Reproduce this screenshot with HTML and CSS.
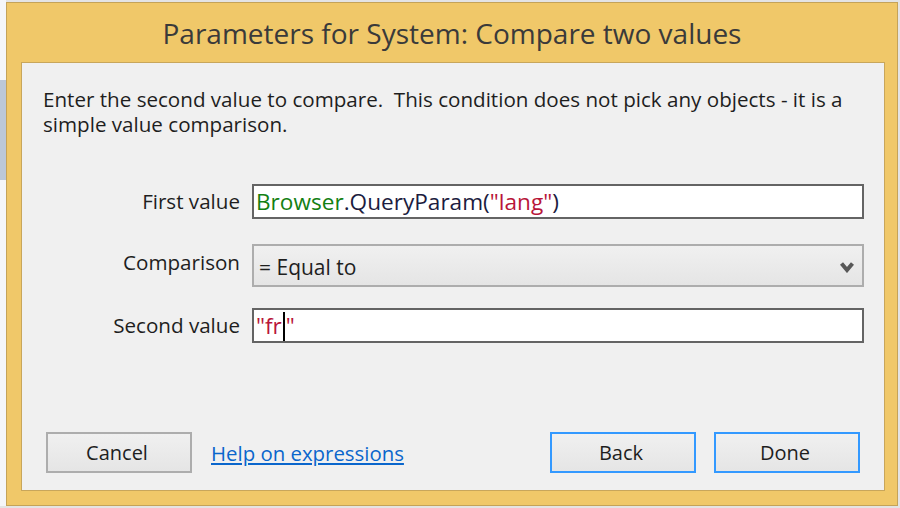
FILE: index.html
```html
<!DOCTYPE html>
<html lang="en">

<head>
    <meta charset="UTF-8">
    <title>Parameters for System: Compare two values</title>
    <link rel="stylesheet" href="styles.css">
</head>

<body>
    <div class="dialog">
        <div class="titlebar">Parameters for System: Compare two values</div>
        <div class="panel">
            <p class="intro">Enter the second value to compare.&nbsp; This condition does not pick any objects - it is a simple value comparison.</p>

            <div class="fields">
                <div class="field-row">
                    <label class="field-label label-first">First value</label>
                    <div class="textbox"><span class="tok-obj">Browser</span>.QueryParam<span class="tok-paren">(</span><span class="tok-str">"lang"</span><span class="tok-paren">)</span></div>
                </div>
                <div class="field-row row-compare">
                    <label class="field-label label-compare">Comparison</label>
                    <div class="dropdown">
                        <span>= Equal to</span>
                        <svg class="chevron" width="14" height="11" viewBox="0 0 14 11">
                            <path d="M1.5 1.5 L7 8 L12.5 1.5" fill="none" stroke="#585858" stroke-width="4" />
                        </svg>
                    </div>
                </div>
                <div class="field-row row-second">
                    <label class="field-label label-second">Second value</label>
                    <div class="textbox"><span class="tok-str">"fr</span><span class="caret"></span><span class="tok-str">"</span></div>
                </div>
            </div>

            <div class="footer">
                <button class="btn">Cancel</button>
                <a class="help-link" href="#">Help on expressions</a>
                <span class="spacer"></span>
                <button class="btn btn-focus">Back</button>
                <button class="btn btn-focus">Done</button>
            </div>
        </div>
    </div>
</body>

</html>
```

FILE: styles.css
```css
body {
    margin: 0;
    padding: 2px 0 0 6px;
    font-family: "Open Sans", "Noto Sans", sans-serif;
    color: #1e1e1e;
    background:
        linear-gradient(to bottom, #f5f6f8 0, #f5f6f8 80px, #bcc8d8 80px, #bcc8d8 180px, #f5f6f8 180px) left top / 6px 100% no-repeat,
        #e4e4e4;
}

.dialog {
    width: 890px;
    height: 502px;
    border: 1px solid #c4a359;
    background-color: #f0c869;
    display: flex;
    flex-direction: column;
}

.titlebar {
    height: 59px;
    line-height: 56px;
    padding-top: 2px;
    box-sizing: border-box;
    text-align: center;
    font-size: 28px;
    color: #3a3a3a;
}

.panel {
    margin: 0 12px 0 14px;
    height: 427px;
    border: 1px solid #c8a65b;
    background-color: #f0f0f0;
    display: flex;
    flex-direction: column;
}

.intro {
    margin: 24px 20px 0 21px;
    font-size: 20.6px;
    line-height: 25px;
}

.fields {
    margin-top: 47px;
    padding-right: 20px;
}

.field-row {
    display: flex;
    align-items: center;
}

.row-compare {
    margin-top: 25px;
}

.row-second {
    margin-top: 21px;
}

.field-label {
    width: 218px;
    padding-right: 12px;
    text-align: right;
    font-size: 20.6px;
    flex: none;
}

.label-first {
    margin-top: -2px;
}

.label-compare {
    margin-top: -7px;
}

.label-second {
    margin-top: -2px;
}

.textbox {
    flex: 1;
    height: 35px;
    box-sizing: border-box;
    border: 2px solid #646464;
    background-color: #fff;
    padding-left: 2px;
    font-size: 22.6px;
    line-height: 31px;
    color: #1c1c40;
    white-space: nowrap;
}

.tok-obj {
    color: #138013;
}

.tok-str {
    color: #b8163a;
}

.tok-paren {
    color: #1c1c40;
}

.caret {
    display: inline-block;
    width: 2px;
    height: 29px;
    margin: 0 1px;
    background-color: #000;
    vertical-align: -7px;
}

.dropdown {
    flex: 1;
    height: 43px;
    box-sizing: border-box;
    border: 2px solid #adadad;
    background: linear-gradient(to bottom, #f0f0f0, #e5e5e5);
    padding: 3px 8px 0 5px;
    display: flex;
    align-items: center;
    justify-content: space-between;
    font-size: 21px;
}

.footer {
    margin-top: auto;
    padding: 0 24px 17px 24px;
    display: flex;
    align-items: center;
    gap: 18px;
}

.spacer {
    flex: 1;
}

.btn {
    width: 146px;
    height: 41px;
    border: 2px solid #adadad;
    background: linear-gradient(to bottom, #f0f0f0, #e5e5e5);
    font-family: inherit;
    font-size: 20px;
    color: #1e1e1e;
    padding: 0 4px 0 0;
}

.btn-focus {
    border-color: #3399ff;
}

.help-link {
    margin-left: 1px;
    color: #0a66cc;
    font-size: 20.4px;
    text-decoration: underline;
}
```
